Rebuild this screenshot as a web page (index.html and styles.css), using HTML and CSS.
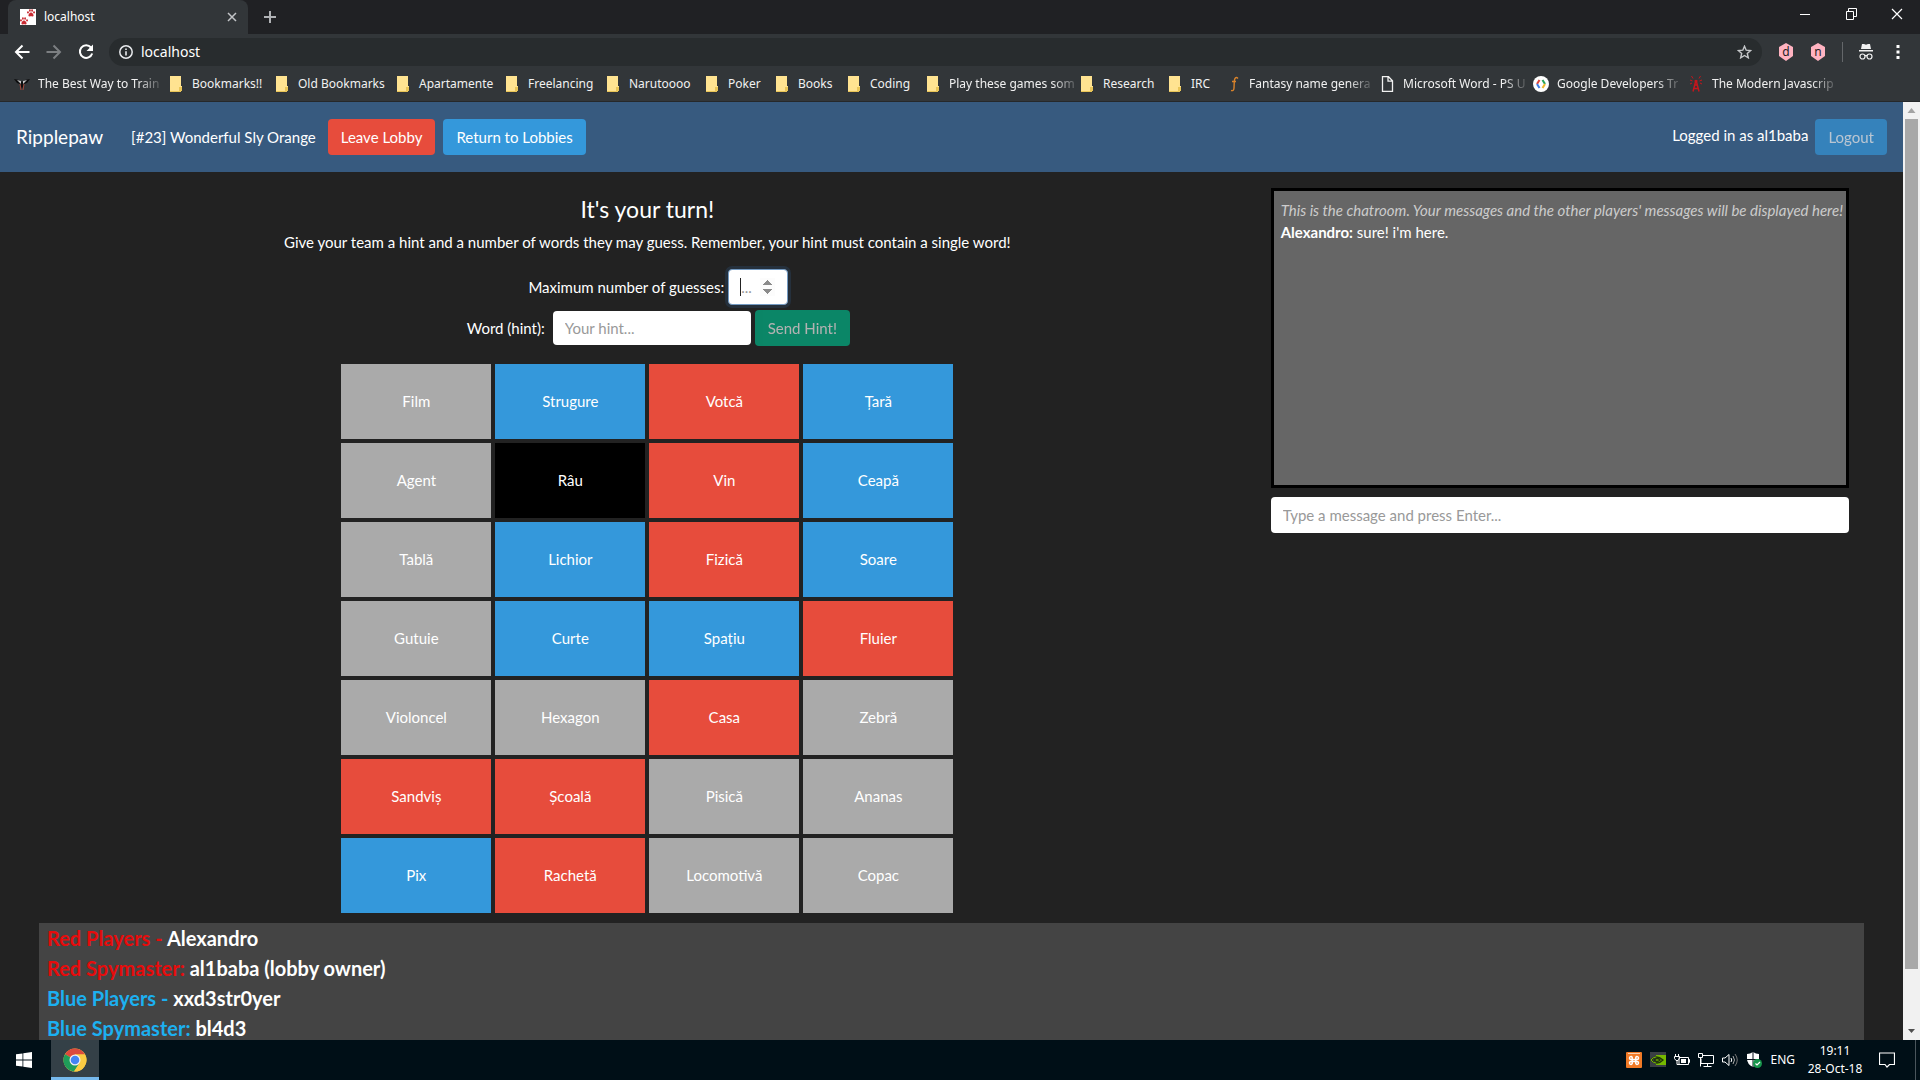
FILE: index.html
```html
<!DOCTYPE html>
<html lang="en">
<head>
<meta charset="utf-8">
<title>localhost</title>
<link rel="stylesheet" href="styles.css">
</head>
<body>
<svg class="defs" aria-hidden="true">
  <symbol id="folder" viewBox="0 0 16 16"><path d="M2 0h11v10h1v5H2z" fill="#ffe391"/><path d="M2 15h11v1H2zM11 11h3v4h-3z" fill="#e9c558"/></symbol>
  <symbol id="paw" viewBox="0 0 10 10"><path d="M5 4.500c1.800 0 3.500 2.500 3.200 4-.3 1.300-2 .6-3.200.6s-2.900.7-3.200-.6c-.3-1.500 1.400-4 3.200-4z"/><ellipse cx="1.200" cy="4.200" rx="1.100" ry="1.500"/><ellipse cx="3.600" cy="1.900" rx="1.100" ry="1.600"/><ellipse cx="6.400" cy="1.900" rx="1.100" ry="1.600"/><ellipse cx="8.800" cy="4.200" rx="1.100" ry="1.500"/></symbol>
</svg>

<header class="browser">
  <div class="tabstrip">
    <div class="tab">
      <svg class="icon16" viewBox="0 0 16 16"><path fill="#fff" d="M0 0h16v16H0z"/><g fill="#c92a32"><use href="#paw" x="7" y="0" width="8" height="8"/><use href="#paw" x="0" y="8" width="8" height="8"/></g></svg>
      <span class="tab-title">localhost</span>
      <button class="plain" aria-label="Close tab"><svg width="10" height="10" viewBox="0 0 10 10"><path d="M1 1l8 8M9 1l-8 8" stroke="#c3c5c8" stroke-width="1.500"/></svg></button>
    </div>
    <button class="plain new-tab" aria-label="New tab"><svg width="12" height="12" viewBox="0 0 12 12"><path d="M6 0v12M0 6h12" stroke="#b0b2b5" stroke-width="2"/></svg></button>
    <div class="window-buttons">
      <button class="plain" aria-label="Minimize"><svg width="10" height="10" viewBox="0 0 10 10"><path d="M0 5.500h10" stroke="#fff"/></svg></button>
      <button class="plain" aria-label="Restore"><svg width="11" height="12" viewBox="0 0 11 12"><path d="M.5 3.500h7v8h-7zM2.500 3V.5h8v8H8" fill="none" stroke="#fff"/></svg></button>
      <button class="plain" aria-label="Close"><svg width="12" height="12" viewBox="0 0 12 12"><path d="M1 1l10 10M11 1L1 11" stroke="#fff" stroke-width="1.200"/></svg></button>
    </div>
  </div>
  <div class="toolbar">
    <button class="plain" aria-label="Back"><svg width="16" height="16" viewBox="0 0 16 16"><path d="M15.500 8H2M8.500 1.500L2 8l6.500 6.500" fill="none" stroke="#fff" stroke-width="2"/></svg></button>
    <button class="plain" aria-label="Forward"><svg width="16" height="16" viewBox="0 0 16 16"><path d="M.5 8H14M7.500 1.500L14 8l-6.500 6.500" fill="none" stroke="#7c7f82" stroke-width="2"/></svg></button>
    <button class="plain" aria-label="Reload"><svg width="16" height="16" viewBox="0 0 16 16"><path d="M13 3.500A6.300 6.300 0 1 0 14.200 9.500" fill="none" stroke="#fff" stroke-width="2"/><path d="M15 .5V7H8.500z" fill="#fff"/></svg></button>
    <div class="omnibox">
      <svg width="14" height="14" viewBox="0 0 14 14"><circle cx="7" cy="7" r="6.200" fill="none" stroke="#e8eaed" stroke-width="1.500"/><path d="M6.200 6.200h1.600v4.300H6.200zM6.200 3.500h1.600v1.600H6.200z" fill="#e8eaed"/></svg>
      <input class="url" type="text" aria-label="Address" value="localhost">
      <svg width="15" height="14" viewBox="0 0 15 14"><path d="M7.500 1.200l1.700 4 4.400.4-3.300 2.900 1 4.300-3.800-2.300-3.800 2.300 1-4.300L1.400 5.600l4.400-.4z" fill="none" stroke="#c6c8ca" stroke-width="1.400"/></svg>
    </div>
    <div class="extensions">
      <svg width="16" height="18" viewBox="0 0 16 18"><path d="M8 0l7 4v9l-7 5-7-5V4z" fill="#ffb3c1"/><text x="8" y="13" class="ext">d</text></svg>
      <svg width="16" height="18" viewBox="0 0 16 18"><path d="M8 0l7 4v9l-7 5-7-5V4z" fill="#ffb3c1"/><text x="8" y="13" class="ext">n</text></svg>
      <span class="rule"></span>
      <svg width="14" height="17" viewBox="0 0 14 17"><path d="M3 0h2l2 .7L9 0h2l1 5H2zM0 6h14v1.500H0z" fill="#f1f1f1"/><g fill="none" stroke="#f1f1f1" stroke-width="1.200"><circle cx="3.500" cy="12.500" r="2.500"/><circle cx="10.500" cy="12.500" r="2.500"/><path d="M6 12q1-1 2 0"/></g></svg>
      <button class="plain menu" aria-label="Menu"><svg width="4" height="16" viewBox="0 0 4 16"><path d="M.5 1h3v3h-3zM.5 6.500h3v3h-3zM.5 12h3v3h-3z" fill="#fff"/></svg></button>
    </div>
  </div>
  <nav class="bookmarks" aria-label="Bookmarks">
    <a class="long" href="#"><svg class="icon16" viewBox="0 0 16 16"><path d="M0 3l5 1 3 2 3-2 5-1-3 4-3 1-2 5-2-5-3-1z" fill="#0c0d0e"/><path d="M3 4l4 1v3L5 6zM13 4L9 5v3l2-2z" fill="#c8c8c8"/><path d="M6 8l1 6M10 8l-1 6" stroke="#a34a3c"/></svg><span>The Best Way to Train</span></a>
    <a href="#"><svg class="icon16"><use href="#folder"/></svg><span>Bookmarks!!</span></a>
    <a href="#"><svg class="icon16"><use href="#folder"/></svg><span>Old Bookmarks</span></a>
    <a href="#"><svg class="icon16"><use href="#folder"/></svg><span>Apartamente</span></a>
    <a href="#"><svg class="icon16"><use href="#folder"/></svg><span>Freelancing</span></a>
    <a href="#"><svg class="icon16"><use href="#folder"/></svg><span>Narutoooo</span></a>
    <a href="#"><svg class="icon16"><use href="#folder"/></svg><span>Poker</span></a>
    <a href="#"><svg class="icon16"><use href="#folder"/></svg><span>Books</span></a>
    <a href="#"><svg class="icon16"><use href="#folder"/></svg><span>Coding</span></a>
    <a class="long" href="#"><svg class="icon16"><use href="#folder"/></svg><span>Play these games som</span></a>
    <a href="#"><svg class="icon16"><use href="#folder"/></svg><span>Research</span></a>
    <a href="#"><svg class="icon16"><use href="#folder"/></svg><span>IRC</span></a>
    <a class="long" href="#"><svg class="icon16" viewBox="0 0 16 16"><path d="M13 2.500C11 .5 9.500 2 9.300 5L9 12c0 2-1 3-3 2.500M7 5.500h4" fill="none" stroke="#d9832b" stroke-width="1.400"/></svg><span>Fantasy name genera</span></a>
    <a class="long" href="#"><svg class="icon16" viewBox="0 0 16 16"><path d="M3.500.7h6l4 4v10.600h-10zM9 1v4.200h4" fill="none" stroke="#f1f1f1" stroke-width="1.300"/></svg><span>Microsoft Word - PS U</span></a>
    <a class="long" href="#"><svg class="icon16" viewBox="0 0 16 16"><circle cx="8" cy="8" r="8" fill="#fff"/><g fill="none" stroke-width="2"><path d="M6.500 4L4 8" stroke="#e0453a"/><path d="M4 8l2.500 4" stroke="#3f7de8"/><path d="M9.500 4L12 8" stroke="#27a35a"/><path d="M12 8l-2.500 4" stroke="#efb82c"/></g></svg><span>Google Developers Tr</span></a>
    <a class="long" href="#"><svg class="icon16" viewBox="0 0 16 16"><g fill="none" stroke="#c4161c" stroke-width="1.500"><path d="M8 4L5 15.500M8 4l3 11.500M6.500 9h3M5.500 12.500h5M6.500 5h3"/><path d="M4.500 5L2 4M5 2.500L3.500 0M11.500 5L14 4M11 2.500L12.500 0M4 7l-2 1M12 7l2 1" stroke-width="1"/></g></svg><span>The Modern Javascrip</span></a>
  </nav>
</header>

<div class="viewport">
  <div class="page">
    <nav class="navbar">
      <a class="brand" href="#">Ripplepaw</a>
      <span class="lobby-name">[#23] Wonderful Sly Orange</span>
      <button class="btn red">Leave Lobby</button>
      <button class="btn blue">Return to Lobbies</button>
      <div class="account"><span>Logged in as al1baba</span><button class="btn blue" disabled>Logout</button></div>
    </nav>
    <main class="content">
      <div class="columns">
        <section class="game">
          <h1>It's your turn!</h1>
          <p>Give your team a hint and a number of words they may guess. Remember, your hint must contain a single word!</p>
          <form class="hint-form">
            <div class="field guesses"><label for="guesses">Maximum number of guesses:</label><span class="number-box"><input class="control number" id="guesses" type="number" placeholder="..."><i class="caret"></i></span></div>
            <div class="field"><label for="hint">Word (hint):</label><input class="control hint" id="hint" type="text" placeholder="Your hint..."><button class="btn green" disabled>Send Hint!</button></div>
          </form>
          <div class="board">
            <button class="card">Film</button><button class="card blue">Strugure</button><button class="card red">Votcă</button><button class="card blue">Țară</button>
            <button class="card">Agent</button><button class="card black">Râu</button><button class="card red">Vin</button><button class="card blue">Ceapă</button>
            <button class="card">Tablă</button><button class="card blue">Lichior</button><button class="card red">Fizică</button><button class="card blue">Soare</button>
            <button class="card">Gutuie</button><button class="card blue">Curte</button><button class="card blue">Spațiu</button><button class="card red">Fluier</button>
            <button class="card">Violoncel</button><button class="card">Hexagon</button><button class="card red">Casa</button><button class="card">Zebră</button>
            <button class="card red">Sandviș</button><button class="card red">Școală</button><button class="card">Pisică</button><button class="card">Ananas</button>
            <button class="card blue">Pix</button><button class="card red">Rachetă</button><button class="card">Locomotivă</button><button class="card">Copac</button>
          </div>
        </section>
        <aside class="chat">
          <div class="messages">
            <div class="notice">This is the chatroom. Your messages and the other players' messages will be displayed here!</div>
            <div><b>Alexandro:</b> sure! i'm here.</div>
          </div>
          <input class="control" type="text" aria-label="Message" placeholder="Type a message and press Enter...">
        </aside>
      </div>
      <section class="players">
        <div><span class="team-red">Red Players - </span>Alexandro</div>
        <div><span class="team-red">Red Spymaster: </span>al1baba (lobby owner)</div>
        <div><span class="team-blue">Blue Players - </span>xxd3str0yer</div>
        <div><span class="team-blue">Blue Spymaster: </span>bl4d3</div>
      </section>
    </main>
  </div>
  <div class="scrollbar">
    <svg width="17" height="17" viewBox="0 0 17 17"><path d="M4.500 11l4-5 4 5z" fill="#a3a3a3"/></svg>
    <div class="track"><div class="thumb"></div></div>
    <svg width="17" height="17" viewBox="0 0 17 17"><path d="M5 6h7l-3.500 4z" fill="#505050"/></svg>
  </div>
</div>

<footer class="taskbar">
  <button class="plain start" aria-label="Start"><svg width="16" height="16" viewBox="0 0 16 16"><path d="M0 2.300L6.500 1.400v6.200H0zM7.300 1.300L16 0v7.600H7.300zM0 8.400h6.500v6.200L0 13.700zM7.300 8.400H16V16l-8.700-1.300z" fill="#fff"/></svg></button>
  <button class="plain task" aria-label="Chrome"><svg width="24" height="24" viewBox="0 0 24 24"><circle cx="12" cy="12" r="11.500" fill="#fbcb43"/><path d="M12 12L2 6.200A11.500 11.500 0 0 1 22 6.500H12z" fill="#dc4a3d"/><path d="M12 12L2 6.200A11.500 11.500 0 0 0 11 23.500L16.500 15z" fill="#1f9d59"/><path d="M12 6.500h10a11.500 11.500 0 0 1-11 17L16.800 14.700z" fill="#fbcb43"/><circle cx="12" cy="12" r="5.500" fill="#f1f1f1"/><circle cx="12" cy="12" r="4.300" fill="#4384f3"/></svg></button>
  <div class="tray">
    <svg class="icon16" viewBox="0 0 16 16"><rect width="16" height="16" rx="1" fill="#f17a26"/><path d="M2 1.500h12" stroke="#fbd0ae"/><path d="M6.200 6.500V5.500a1.400 1.400 0 1 0-1.400 1.900h6.400a1.400 1.400 0 1 0-1.400-1.900v6a1.400 1.400 0 1 0 1.400-1.900H4.800a1.400 1.400 0 1 0 1.400 1.900z" fill="none" stroke="#fff" stroke-width="1.500"/></svg>
    <svg class="icon16" viewBox="0 0 16 16"><path fill="#3a3f44" d="M0 0h16v15H0z"/><path fill="#76b900" d="M6 3h10v10H6z"/><path d="M1 8q5-6 12 0-6 6-12 0zM4 8q3-3 6 0-3 3-6 0" fill="none" stroke="#20340a" stroke-width="1.300"/><path d="M1 8q2-3 5-3M1 8q2 3 5 3" fill="none" stroke="#76b900"/></svg>
    <svg class="icon16" viewBox="0 0 16 16"><path d="M5 5.500h9.500v7H5zM14.500 7.500h1v3h-1M1.500 2v2.500M4.500 2v2.500M.5 4.500h5v2l-1.500 2H2l-1.500-2zM3 8.500v4h2" fill="none" stroke="#fff"/><path d="M7 7h5v4H7z" fill="#fff"/></svg>
    <svg class="icon16" viewBox="0 0 16 16"><path d="M4 3.500h11.500v8H3v-5M9.500 11.500v3M5.500 14.500h8M.5 1.500h4v4h-4zM2.500 5.500v9" fill="none" stroke="#fff"/></svg>
    <svg class="icon16" viewBox="0 0 16 16"><path d="M.5 6h2.500l4-3.500v11L3 10H.5z" fill="none" stroke="#fff"/><path d="M9 6q1.500 2 0 4" fill="none" stroke="#fff"/><path d="M11 4q3 4 0 8" fill="none" stroke="#aaa"/><path d="M13 2q4.500 6 0 12" fill="none" stroke="#777"/></svg>
    <svg class="icon16" viewBox="0 0 16 16"><path d="M7 0q3 2 6 2v5q0 5-6 8-6-3-6-8V2q3 0 6-2z" fill="#fff"/><path d="M7 0v15M1 7.500h12" stroke="#06111a"/><circle cx="11.500" cy="11.500" r="4.500" fill="#17964c"/><path d="M9.500 11.500l1.500 1.500 3-3" fill="none" stroke="#fff" stroke-width="1.200"/></svg>
    <span>ENG</span>
    <div class="clock"><span>19:11</span><span>28-Oct-18</span></div>
    <svg width="16" height="16" viewBox="0 0 16 16"><path d="M.5 1h15v11.500h-5L8 15l-2-2.500H.5z" fill="none" stroke="#fff" stroke-width="1.200"/></svg>
    <span class="peek"></span>
  </div>
</footer>
</body>
</html>
```
FILE: styles.css
```css
* { box-sizing: border-box; }
body {
  margin: 0;
  height: 100vh;
  display: flex;
  flex-direction: column;
  overflow: hidden;
  background: #222;
  color: #fff;
  font: 15px/22px Lato, sans-serif;
}
svg { display: block; flex: none; }
.defs { position: absolute; width: 0; height: 0; }
.icon16 { width: 16px; height: 16px; }
button, input { font: inherit; color: inherit; }
.plain {
  display: flex;
  align-items: center;
  justify-content: center;
  padding: 0;
  border: 0;
  background: none;
}

/* Browser chrome */
.browser {
  flex: none;
  background: #323639;
  border-bottom: 1px solid #26282a;
  font: 12px/16px "Noto Sans", "Open Sans", sans-serif;
}
.tabstrip { display: flex; height: 34px; padding-left: 8px; background: #202124; }
.tab {
  display: flex;
  align-items: center;
  gap: 8px;
  width: 240px;
  padding: 0 11px 0 12px;
  border-radius: 8px 8px 0 0;
  background: #323639;
}
.tab-title { flex: 1; }
.new-tab { width: 44px; }
.window-buttons { display: flex; align-items: flex-start; margin-left: auto; }
.window-buttons .plain { width: 46px; height: 28px; }
.toolbar { display: flex; align-items: center; height: 36px; padding: 0 20px 0 14px; gap: 16px; }
.omnibox {
  flex: 1;
  display: flex;
  align-items: center;
  gap: 8px;
  height: 28px;
  margin-left: -1px;
  padding: 0 10px;
  border-radius: 14px;
  background: #282c2e;
}
.url { flex: 1; padding: 0; border: 0; background: none; font-size: 14px; line-height: 20px; }
.extensions { display: flex; align-items: center; gap: 16px; }
.ext { font: 12px "Noto Sans", sans-serif; text-anchor: middle; fill: #222; }
.menu { margin-left: 7px; }
.rule { width: 1px; height: 20px; background: #64676a; }
.bookmarks {
  display: grid;
  grid-template-columns: 154px 106px 121px 109px 101px 99px 70px 72px 79px 154px 88px 58px 154px 154px 155px 154px;
  align-items: center;
  height: 31px;
  padding: 0 0 4px 14px;
}
.bookmarks a { display: flex; gap: 8px; color: #f1f1f1; text-decoration: none; white-space: nowrap; }
.long span {
  -webkit-mask-image: linear-gradient(90deg, #000 82%, #0003);
  mask-image: linear-gradient(90deg, #000 82%, #0003);
}

/* Page */
.viewport { flex: 1; min-height: 0; display: flex; overflow: hidden; }
.page { flex: 1; min-width: 0; overflow: hidden; }
.navbar {
  display: flex;
  align-items: center;
  height: 70px;
  padding: 0 16px;
  background: #375a7f;
}
.brand { margin-right: 28px; color: #fff; font-size: 19px; text-decoration: none; }
.lobby-name { margin-right: 12px; }
.account { display: flex; gap: 7px; margin-left: auto; }
.account span { padding-top: 5px; }
.btn { height: 36px; padding: 0 13px; border: 0; border-radius: 4px; }
.btn + .btn { margin-left: 8px; }
.btn:disabled { opacity: .65; }
.blue { background: #3498db; }
.red { background: #e74c3c; }
.green { background: #00bc8c; }
.black { background: #000; }

.content { padding: 16px 39px 0; }
.columns { display: grid; grid-template-columns: minmax(0, 2fr) minmax(0, 1fr); }
.game { text-align: center; }
h1 { margin: 7px 0 8px; font-size: 23px; line-height: 28px; font-weight: 400; }
p { margin: 0 0 16px; }
.field { display: flex; justify-content: center; align-items: center; gap: 4px; margin-left: 22px; }
.guesses { margin-bottom: 5px; }
.field label + .hint { margin-left: 4px; }
.control {
  width: 100%;
  height: 36px;
  padding: 0 12px;
  border: 0;
  border-radius: 4px;
  background: #fff;
  color: #444;
}
.control::placeholder { color: #999; opacity: 1; }
.number-box { position: relative; width: 60px; }
.number {
  display: block;
  border: 1px solid #739ac2;
  box-shadow: 0 0 0 3px #25303c;
}
.number::-webkit-inner-spin-button { opacity: 1; }
.caret { position: absolute; left: 12px; top: 9px; width: 1px; height: 18px; background: #222; }
.field .hint { width: 198px; height: 34px; }
.board {
  display: grid;
  grid-template-columns: repeat(4, 150px);
  justify-content: center;
  gap: 4px;
  margin-top: 18px;
}
.card { height: 75px; padding: 0 0 2px; border: 0; background-color: #aaa; }
.card.blue { background-color: #3498db; }
.card.red { background-color: #e74c3c; }
.card.black { background-color: #000; }

.chat { padding: 0 15px; }
.messages {
  height: 300px;
  margin-bottom: 9px;
  padding: 8px 6px 8px 7px;
  border: 3px solid #000;
  background: #666;
  white-space: nowrap;
}
.notice { color: #ccc; font-style: italic; }
.players {
  margin-top: 10px;
  padding: 0 8px;
  background: #444;
  font-size: 20px;
  line-height: 30px;
  font-weight: 700;
}
.team-red { color: #e60c0c; }
.team-blue { color: #1cb0f0; }

.scrollbar { flex: none; display: flex; flex-direction: column; width: 17px; background: #f1f1f1; }
.track { flex: 1; padding: 0 2px; }
.thumb { height: 94%; background: #a8a8a8; }

/* Taskbar */
.taskbar {
  flex: none;
  display: flex;
  height: 40px;
  background: #000f17;
  font: 12px/22px "Noto Sans", "Open Sans", sans-serif;
}
.start { width: 48px; }
.task { width: 48px; margin-left: 3px; padding-top: 3px; border-bottom: 3px solid #76b9ed; background: #344047; }
.tray { display: flex; align-items: center; gap: 8px; margin-left: auto; }
.clock { display: flex; flex-direction: column; align-items: center; width: 64px; margin-right: 4px; line-height: 18px; }
.peek { width: 5px; height: 40px; margin-left: 12px; border-left: 1px solid #4a555c; }
```
